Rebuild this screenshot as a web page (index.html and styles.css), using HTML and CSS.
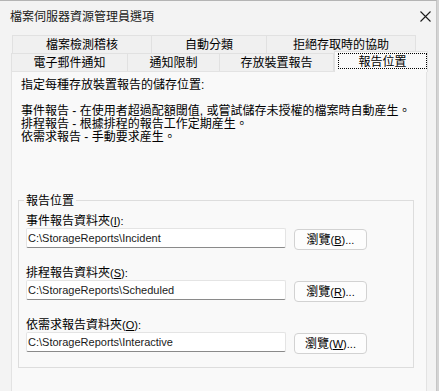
FILE: index.html
```html
<!DOCTYPE html>
<html lang="zh-Hant">
<head>
<meta charset="utf-8">
<title>檔案伺服器資源管理員選項</title>
<link rel="stylesheet" href="styles.css">
</head>
<body>
<div class="window">
  <div class="titlebar">
    <span class="title">檔案伺服器資源管理員選項</span>
    <svg class="close" width="11" height="11" viewBox="0 0 11 11"><path d="M0.5 0.5 L10.5 10.5 M10.5 0.5 L0.5 10.5" stroke="#1b1b1b" stroke-width="1.1" fill="none"/></svg>
  </div>
  <div class="tabs">
    <div class="tabrow row1">
      <div class="tab t1a">檔案檢測稽核</div>
      <div class="tab t1b">自動分類</div>
      <div class="tab t1c">拒絕存取時的協助</div>
    </div>
    <div class="tabrow row2">
      <div class="tab t2a">電子郵件通知</div>
      <div class="tab t2b">通知限制</div>
      <div class="tab t2c">存放裝置報告</div>
      <div class="tab selected"><span class="focus">報告位置</span></div>
    </div>
  </div>
  <div class="panel">
    <div class="desc">
      <div class="line">指定每種存放裝置報告的儲存位置<span class="lat">:</span></div>
      <div class="line">&nbsp;</div>
      <div class="line">事件報告<span class="lat"> - </span>在使用者超過配額閾值<span class="lat">, </span>或嘗試儲存未授權的檔案時自動産生。</div>
      <div class="line">排程報告<span class="lat"> - </span>根據排程的報告工作定期産生。</div>
      <div class="line">依需求報告<span class="lat"> - </span>手動要求産生。</div>
    </div>
    <fieldset class="group">
      <legend>報告位置</legend>
      <div class="field">
        <div class="label">事件報告資料夾<span class="lat">(<u>I</u>):</span></div>
        <div class="inrow">
          <div class="input">C:\StorageReports\Incident</div>
          <div class="button">瀏覽<span class="lat">(<u>B</u>)...</span></div>
        </div>
      </div>
      <div class="field">
        <div class="label">排程報告資料夾<span class="lat">(<u>S</u>):</span></div>
        <div class="inrow">
          <div class="input">C:\StorageReports\Scheduled</div>
          <div class="button">瀏覽<span class="lat">(<u>R</u>)...</span></div>
        </div>
      </div>
      <div class="field last">
        <div class="label">依需求報告資料夾<span class="lat">(<u>O</u>):</span></div>
        <div class="inrow">
          <div class="input">C:\StorageReports\Interactive</div>
          <div class="button">瀏覽<span class="lat">(<u>W</u>)...</span></div>
        </div>
      </div>
    </fieldset>
  </div>
</div>
</body>
</html>
```

FILE: styles.css
```css
* { box-sizing: border-box; }
html, body {
  margin: 0;
  padding: 0;
  height: 391px;
  overflow: hidden;
  background: #d4d4d4;
}
body {
  font-family: "Noto Sans CJK TC", sans-serif;
  font-size: 12px;
  color: #000;
}
.lat {
  font-family: "Liberation Sans", "Noto Sans CJK TC", sans-serif;
  font-size: 11px;
}
.window {
  width: 437px;
  height: 391px;
  background: #f3f3f3;
  border-top: 1px solid #b4b4b4;
  border-right: 1px solid #c6c6c6;
  overflow: hidden;
}
.titlebar {
  height: 30px;
  display: flex;
  align-items: center;
  justify-content: space-between;
  padding: 0 5px 0 10px;
}
.title {
  font-size: 12px;
  line-height: 14px;
  color: #1a1a1a;
}
.close { display: block; }
.tabs {
  margin-top: 4px;
  padding-left: 11px;
}
.tabrow {
  display: flex;
  height: 18px;
}
.row1 { padding-left: 1px; }
.tab {
  height: 18px;
  background: #f0f0f0;
  border: 1px solid #e1e1e1;
  border-bottom: none;
  margin-right: -1px;
  font-size: 12px;
  line-height: 16px;
  text-align: center;
  color: #000;
}
.t1a { width: 140px; }
.t1b { width: 116px; }
.t1c { width: 150px; }
.t2a { width: 117px; }
.t2b { width: 93px; }
.t2c { width: 115px; }
.tab.selected {
  width: 94px;
  height: 21px;
  margin-top: -2px;
  margin-left: 1px;
  background: #f9f9f9;
  border-color: #e1e1e1;
  position: relative;
  z-index: 1;
  padding: 1px 0 0 3px;
}
.focus {
  display: block;
  height: 16px;
  border: 1px dotted #000;
  line-height: 14px;
}
.panel {
  margin-left: 11px;
  width: 416px;
  height: 340px;
  background: #f9f9f9;
  border: 1px solid #e3e3e3;
}
.desc {
  padding: 5px 0 0 9px;
}
.desc .lat { font-size: 12px; }
.line {
  line-height: 13px;
  height: 13px;
  white-space: nowrap;
}
.group {
  margin: 51px 0 0 6px;
  width: 396px;
  border: 1px solid #dddddd;
  padding: 0 0 14px 7px;
  min-width: 0;
}
.group legend {
  padding: 0 2px;
  margin-left: -2px;
  line-height: 14px;
  height: 14px;
}
.field { margin-top: 6px; }
.field + .field { margin-top: 16px; }
.label {
  height: 14px;
  line-height: 14px;
  margin-bottom: 1px;
  white-space: nowrap;
}
.inrow {
  display: flex;
  align-items: flex-start;
  height: 21px;
}
.input {
  width: 260px;
  height: 20px;
  background: #ffffff;
  border: 1px solid #e4e4e4;
  border-bottom: 1px solid #8a8a8a;
  border-radius: 2px;
  padding-left: 1px;
  line-height: 18px;
  font-family: "Liberation Sans", sans-serif;
  font-size: 11px;
  color: #1a1a1a;
  white-space: nowrap;
  overflow: hidden;
}
.button {
  margin-left: 8px;
  margin-top: 1px;
  width: 73px;
  height: 21px;
  background: #fdfdfd;
  border: 1px solid #d2d2d2;
  border-radius: 4px;
  text-align: center;
  line-height: 18px;
  font-size: 12px;
  white-space: nowrap;
}
```
